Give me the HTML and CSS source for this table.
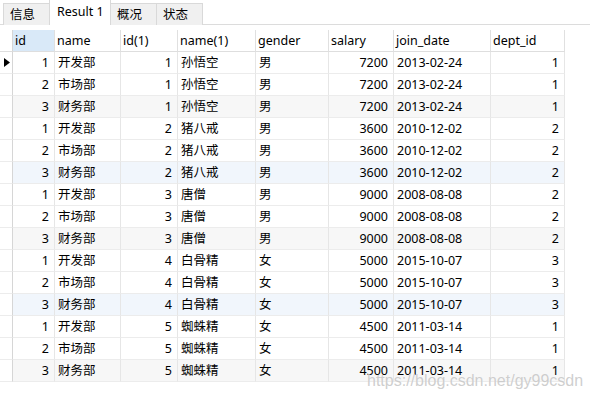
FILE: index.html
```html
<!DOCTYPE html>
<html lang="zh">
<head>
    <meta charset="UTF-8" />
    <title>Result 1</title>
    <link rel="stylesheet" href="styles.css">
</head>
<body>

    <div class="tabs">
        <div class="tab">信息</div>
        <div class="tab active">Result 1</div>
        <div class="tab">概况</div>
        <div class="tab">状态</div>
    </div>

    <div class="grid" id="grid">
        <div class="row head">
            <div class="cell ind"></div>
            <div class="cell sel">id</div>
            <div class="cell">name</div>
            <div class="cell">id(1)</div>
            <div class="cell">name(1)</div>
            <div class="cell">gender</div>
            <div class="cell">salary</div>
            <div class="cell">join_date</div>
            <div class="cell">dept_id</div>
        </div>
    </div>

    <div class="watermark">https://blog.csdn.net/gy99csdn</div>

    <script>
        const emps = [
            [1, "孙悟空", "男", 7200, "2013-02-24", 1],
            [2, "猪八戒", "男", 3600, "2010-12-02", 2],
            [3, "唐僧", "男", 9000, "2008-08-08", 2],
            [4, "白骨精", "女", 5000, "2015-10-07", 3],
            [5, "蜘蛛精", "女", 4500, "2011-03-14", 1]
        ];
        const depts = [[1, "开发部"], [2, "市场部"], [3, "财务部"]];
        const grid = document.getElementById("grid");
        let n = 0;
        emps.forEach(e => {
            depts.forEach(d => {
                n++;
                let row = document.createElement("div");
                row.className = "row";
                if (n % 6 === 3) row.className += " grey";
                if (n % 6 === 0) row.className += " blue";
                let mark = n === 1 ? '<svg width="6" height="9" viewBox="0 0 6 9"><polygon points="0,0 6,4.5 0,9" fill="#000"/></svg>' : "";
                row.innerHTML = `
                    <div class="cell ind">${mark}</div>
                    <div class="cell num">${d[0]}</div>
                    <div class="cell">${d[1]}</div>
                    <div class="cell num">${e[0]}</div>
                    <div class="cell">${e[1]}</div>
                    <div class="cell">${e[2]}</div>
                    <div class="cell num">${e[3]}</div>
                    <div class="cell">${e[4]}</div>
                    <div class="cell num">${e[5]}</div>
                `;
                grid.appendChild(row);
            });
        });
    </script>

</body>
</html>
```

FILE: styles.css
```css
body {
    margin: 0;
    background: #fff;
    color: #000;
    font-family: "Noto Sans", "Noto Sans CJK SC", sans-serif;
    font-size: 12.5px;
    position: relative;
    height: 397px;
    overflow: hidden;
}

.tabs {
    display: flex;
    align-items: flex-end;
    height: 25px;
    padding-left: 3px;
    border-bottom: 1px solid #dcdcdc;
    box-sizing: border-box;
}

.tab {
    height: 22px;
    line-height: 21px;
    padding: 0 0 0 6px;
    background: #f0f0f0;
    border: 1px solid #d9d9d9;
    border-bottom: none;
    box-sizing: border-box;
    margin-bottom: -1px;
    width: 47px;
    margin-right: -1px;
    white-space: nowrap;
}

.tab.active {
    height: 26px;
    line-height: 23px;
    width: 62px;
    background: #fff;
    padding-left: 7px;
    position: relative;
    z-index: 1;
}

.grid {
    margin-top: 5px;
    width: 565px;
}

.row {
    display: grid;
    grid-template-columns: 13px 42px 66px 57px 78px 73px 65px 97px 74px;
    height: 22px;
}

.row.grey { background: #f7f7f7; }
.row.blue { background: #f1f6fc; }

.cell {
    border-right: 1px solid #e6e6e6;
    border-bottom: 1px solid #ececec;
    box-sizing: border-box;
    padding: 0 3px;
    line-height: 21px;
    white-space: nowrap;
    overflow: hidden;
}

.head .cell {
    border-right-color: #e0e0e0;
    border-bottom-color: #dedede;
    padding-left: 2px;
}

.head .sel { background: #d9e9f8; }

.cell.num {
    text-align: right;
    padding-right: 5px;
}

.cell.ind {
    padding: 0 0 0 4px;
    background: #fff;
    border-right-color: #d6d6d6;
    display: flex;
    align-items: center;
}

.watermark {
    position: absolute;
    left: 367px;
    top: 372px;
    font-family: "Liberation Sans", Arial, sans-serif;
    font-size: 16px;
    color: rgba(190, 190, 190, 0.75);
    text-shadow: 0 0 1px rgba(255, 255, 255, 0.8);
}
```
